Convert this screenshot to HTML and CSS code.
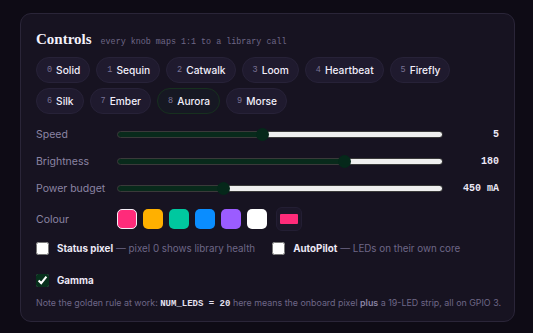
FILE: index.html
```html
<!DOCTYPE html>
<html>
<head>
    <meta charset="utf-8">
    <link rel="stylesheet" href="styles.css">
</head>
<body>
    <div class="card">
        <div class="card-head">
            <h2>Controls</h2>
            <span class="hint">every knob maps 1:1 to a library call</span>
        </div>

        <div class="modes">
            <button class="chip"><span class="num">0</span>Solid</button>
            <button class="chip"><span class="num">1</span>Sequin</button>
            <button class="chip"><span class="num">2</span>Catwalk</button>
            <button class="chip"><span class="num">3</span>Loom</button>
            <button class="chip"><span class="num">4</span>Heartbeat</button>
            <button class="chip"><span class="num">5</span>Firefly</button>
            <button class="chip"><span class="num">6</span>Silk</button>
            <button class="chip"><span class="num">7</span>Ember</button>
            <button class="chip active"><span class="num">8</span>Aurora</button>
            <button class="chip"><span class="num">9</span>Morse</button>
        </div>

        <div class="knobs">
            <label class="knob-label">Speed</label>
            <input type="range" min="1" max="10" value="5" class="knob" style="--p:44.4%">
            <span class="knob-value">5</span>

            <label class="knob-label">Brightness</label>
            <input type="range" min="0" max="255" value="180" class="knob" style="--p:70.6%">
            <span class="knob-value">180</span>

            <label class="knob-label">Power budget</label>
            <input type="range" min="100" max="1200" value="450" class="knob" style="--p:31.8%">
            <span class="knob-value">450 mA</span>

            <label class="knob-label">Colour</label>
            <div class="swatches">
                <button class="swatch selected" style="background:#ff2b7a"></button>
                <button class="swatch" style="background:#ffb000"></button>
                <button class="swatch" style="background:#00c89f"></button>
                <button class="swatch" style="background:#0a8dff"></button>
                <button class="swatch" style="background:#9b5cff"></button>
                <button class="swatch" style="background:#ffffff"></button>
                <input type="color" class="picker" value="#ff2b7a">
            </div>
        </div>

        <div class="toggles">
            <label class="toggle"><input type="checkbox"><b>Status pixel</b> — pixel 0 shows library health</label>
            <label class="toggle"><input type="checkbox"><b>AutoPilot</b> — LEDs on their own core</label>
        </div>
        <div class="toggles">
            <label class="toggle"><input type="checkbox" checked><b>Gamma</b></label>
        </div>

        <p class="note">Note the golden rule at work: <code>NUM_LEDS = 20</code> here means the onboard pixel <b>plus</b> a 19-LED strip, all on GPIO 3.</p>
    </div>
</body>
</html>
```

FILE: styles.css
```css
body {
    margin: 0;
    padding: 13px 18px 16px 20px;
    background: #0e0b15;
    font-family: Inter, "Noto Sans", sans-serif;
    color: #ece8f6;
}
.card {
    background: #171321;
    border: 1px solid #2a2538;
    border-radius: 11px;
    padding: 17px 15px 12px 15px;
}
.card-head {
    display: flex;
    align-items: baseline;
    gap: 9px;
    margin-bottom: 9px;
}
.card-head h2 {
    margin: 0;
    font-family: "Liberation Serif", serif;
    font-size: 15px;
    font-weight: bold;
    color: #f4f1fb;
}
.hint {
    font-family: "Liberation Mono", monospace;
    font-size: 8.4px;
    color: #6e6787;
}
.modes {
    display: flex;
    flex-wrap: wrap;
    gap: 5px 6px;
    margin-bottom: 12px;
}
.chip {
    height: 26px;
    padding: 0 9px 0 10px;
    border-radius: 13px;
    border: 1px solid #272238;
    background: #1f1a2e;
    color: #f1eefa;
    font-family: inherit;
    font-size: 10.2px;
    font-weight: 500;
    display: flex;
    align-items: center;
    gap: 4px;
    cursor: pointer;
}
.chip .num {
    font-family: "Liberation Mono", monospace;
    font-size: 8.5px;
    font-weight: normal;
    color: #7a7395;
}
.chip.active {
    background: #161823;
    border-color: #17301f;
}
.knobs {
    display: grid;
    grid-template-columns: 73px 1fr 48px;
    column-gap: 8px;
    row-gap: 11px;
    align-items: center;
}
.knob-label {
    font-size: 10.5px;
    color: #8b84a3;
}
.knob {
    -webkit-appearance: none;
    appearance: none;
    margin: 0;
    width: 100%;
    height: 16px;
    background: transparent;
}
.knob::-webkit-slider-runnable-track {
    height: 7px;
    border-radius: 4px;
    border: 1px solid #3a3a3a;
    background: linear-gradient(to right, #082a1b var(--p), #efefef var(--p));
}
.knob::-webkit-slider-thumb {
    -webkit-appearance: none;
    width: 13px;
    height: 13px;
    margin-top: -4px;
    border-radius: 50%;
    background: #05281a;
    border: none;
}
.knob-value {
    font-family: "Liberation Mono", monospace;
    font-size: 10px;
    font-weight: bold;
    text-align: right;
    color: #ece8f6;
}
.swatches {
    display: flex;
    align-items: center;
    gap: 6px;
    grid-column: span 2;
}
.swatch {
    width: 20px;
    height: 20px;
    border-radius: 5px;
    border: none;
    padding: 0;
    cursor: pointer;
}
.swatch.selected {
    border: 1px solid #f4eef6;
}
.picker {
    margin-left: 3px;
    width: 26px;
    height: 24px;
    padding: 4px 2px;
    border: 1px solid #231e33;
    border-radius: 6px;
    background: #1c1729;
    cursor: pointer;
}
.picker::-webkit-color-swatch-wrapper {
    padding: 2px 1px;
}
.picker::-webkit-color-swatch {
    border: none;
    border-radius: 1px;
}
.toggles {
    display: flex;
    gap: 17px;
    margin-top: 11px;
}
.toggle {
    display: flex;
    align-items: center;
    font-size: 9.8px;
    color: #6e6787;
    white-space: nowrap;
}
.toggle input {
    margin: 0 8px 0 0;
    width: 13px;
    height: 13px;
    accent-color: #07301c;
}
.toggle b {
    color: #ece8f6;
    margin-right: 3px;
}
.toggles + .toggles {
    margin-top: 19px;
}
.note {
    margin: 10px 0 0;
    font-size: 8.9px;
    color: #6e6787;
    white-space: nowrap;
}
.note code {
    font-family: "Liberation Mono", monospace;
    font-weight: bold;
    color: #e5e1f0;
    font-size: 9px;
}
.note b {
    color: #8b84a3;
    font-weight: 600;
}
```
